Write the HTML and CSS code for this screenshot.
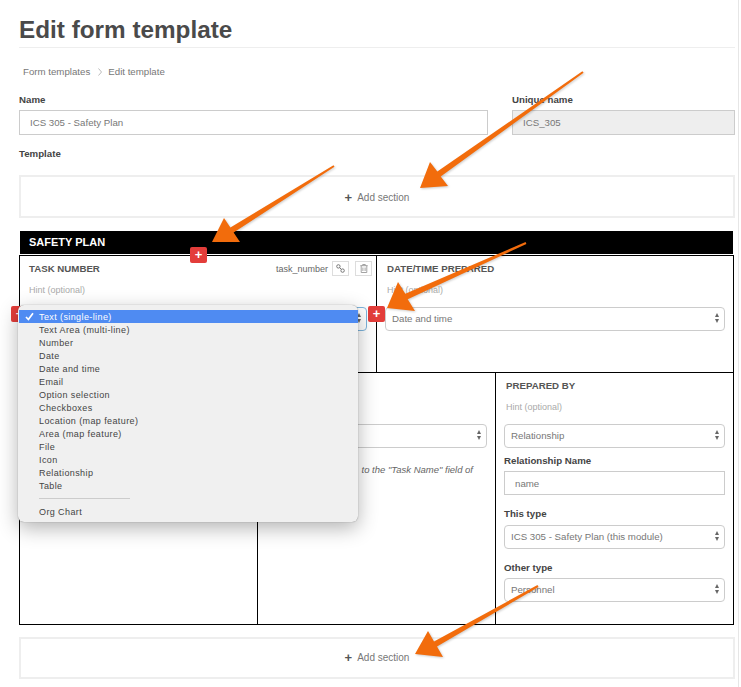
FILE: index.html
```html
<!DOCTYPE html>
<html lang="en">
<head>
    <meta charset="UTF-8">
    <meta name="viewport" content="width=device-width, initial-scale=1.0">
    <title>Edit form template</title>
    <link rel="stylesheet" href="styles.css">
</head>
<body>
    <div class="page">
        <h1>Edit form template</h1>

        <!-- Breadcrumb -->
        <nav class="breadcrumb">
            <span>Form templates</span>
            <svg class="crumb-sep" width="4" height="8" viewBox="0 0 4 8"><path d="M0.5 0.5 L3.5 4 L0.5 7.5" fill="none" stroke="#aaa" stroke-width="0.8"/></svg>
            <span>Edit template</span>
        </nav>

        <!-- Name fields -->
        <div class="name-row">
            <div>
                <label class="label">Name</label>
                <div class="input">ICS 305 - Safety Plan</div>
            </div>
            <div>
                <label class="label">Unique name</label>
                <div class="input input-disabled">ICS_305</div>
            </div>
        </div>

        <div class="label template-label">Template</div>

        <div class="add-section add-top"><span class="add-plus">+</span> Add section</div>

        <!-- Section -->
        <div class="section-title">SAFETY PLAN</div>
        <div class="section-table">
            <div class="row row-two">
                <div class="cell">
                    <div class="cell-head">
                        <span class="field-title">TASK NUMBER</span>
                        <span class="field-meta">
                            <span>task_number</span>
                            <span class="icon-btn">
                                <svg width="9" height="9" viewBox="0 0 9 9" fill="none" stroke="#777" stroke-width="1"><circle cx="2.4" cy="2.4" r="1.7"/><circle cx="6.6" cy="6.6" r="1.7"/><path d="M3.6 3.6 L5.4 5.4"/></svg>
                            </span>
                            <span class="icon-btn">
                                <svg width="8" height="9" viewBox="0 0 8 9" fill="none" stroke="#999" stroke-width="0.9"><path d="M0.3 1.7 H7.7 M2.7 1.7 V0.5 H5.3 V1.7 M1.2 1.7 V8.5 H6.8 V1.7 M2.9 3.5 V7 M5.1 3.5 V7"/></svg>
                            </span>
                        </span>
                    </div>
                    <div class="hint">Hint (optional)</div>
                    <div class="select select-focus"><span></span><span class="updown"></span></div>
                </div>
                <div class="cell">
                    <div class="cell-head"><span class="field-title">DATE/TIME PREPARED</span></div>
                    <div class="hint">Hint (optional)</div>
                    <div class="select"><span>Date and time</span><span class="updown"></span></div>
                </div>
            </div>
            <div class="row row-three">
                <div class="cell"></div>
                <div class="cell">
                    <div class="select select-middle"><span></span><span class="updown"></span></div>
                    <p class="help">to the "Task Name" field of</p>
                </div>
                <div class="cell">
                    <div class="cell-head"><span class="field-title">PREPARED BY</span></div>
                    <div class="hint">Hint (optional)</div>
                    <div class="select"><span>Relationship</span><span class="updown"></span></div>
                    <div class="label sub-label first">Relationship Name</div>
                    <div class="input input-name">name</div>
                    <div class="label sub-label">This type</div>
                    <div class="select select-sub"><span>ICS 305 - Safety Plan (this module)</span><span class="updown"></span></div>
                    <div class="label sub-label">Other type</div>
                    <div class="select select-last"><span>Personnel</span><span class="updown"></span></div>
                </div>
            </div>
        </div>

        <div class="add-section add-bottom"><span class="add-plus">+</span> Add section</div>
    </div>

    <!-- Red insert buttons -->
    <span class="insert insert-top">+</span>
    <span class="insert insert-left">+</span>
    <span class="insert insert-right">+</span>

    <!-- Open native select menu -->
    <ul class="menu">
        <li class="selected">
            <svg class="check" width="9" height="9" viewBox="0 0 9 9"><path d="M1 5 L3.4 7.5 L8 1.2" fill="none" stroke="#fff" stroke-width="1.7"/></svg>
            Text (single-line)
        </li>
        <li>Text Area (multi-line)</li>
        <li>Number</li>
        <li>Date</li>
        <li>Date and time</li>
        <li>Email</li>
        <li>Option selection</li>
        <li>Checkboxes</li>
        <li>Location (map feature)</li>
        <li>Area (map feature)</li>
        <li>File</li>
        <li>Icon</li>
        <li>Relationship</li>
        <li>Table</li>
        <li class="divider"></li>
        <li>Org Chart</li>
    </ul>

    <!-- Annotation arrows -->
    <svg class="arrows" width="741" height="687" viewBox="0 0 741 687">
        <polygon points="583.6,72.8 440.7,176.4 448,186 420,188 430,162 437.3,171.6 582.4,71.2"/>
        <polygon points="334.5,166.8 233.6,232.5 240,242 212,242 224,218 230.4,227.5 333.5,165.2"/>
        <polygon points="526.4,243.9 407.7,299.2 415,311 387,308 398,282 405.3,293.8 525.6,242.1"/>
        <polygon points="538.5,586.9 437,646.6 443,657 415,654 428,631 434,641.4 537.5,585.1"/>
    </svg>
</body>
</html>
```

FILE: styles.css
```css
/* Base */
body {
    margin: 0;
    height: 687px;
    overflow: hidden;
    position: relative;
    background-color: #fff;
    font-family: "Liberation Sans", Arial, sans-serif;
    font-size: 9.7px;
    color: #777;
}

.page {
    width: 716px;
    height: 687px;
    padding-left: 19px;
    padding-right: 3px;
    border-right: 1px solid #e6e6e6;
}

h1 {
    margin: 0;
    height: 47px;
    line-height: 60px;
    font-size: 24.3px;
    font-weight: bold;
    color: #4a4a4a;
    border-bottom: 1px solid #eee;
}

.breadcrumb {
    display: flex;
    align-items: center;
    gap: 6px;
    height: 12px;
    margin-top: 18px;
    padding-left: 4px;
    line-height: 12px;
}

.crumb-sep {
    margin-left: 2px;
}

/* Form fields */
.name-row {
    display: grid;
    grid-template-columns: 469px 223px;
    gap: 24px;
    margin-top: 16px;
}

.label {
    display: block;
    height: 12px;
    line-height: 12px;
    font-size: 9.7px;
    font-weight: bold;
    color: #444;
}

.name-row .label {
    margin-bottom: 4px;
}

.input {
    box-sizing: border-box;
    height: 25px;
    line-height: 23px;
    padding-left: 10px;
    border: 1px solid #ccc;
    background-color: #fff;
}

.input-disabled {
    background-color: #eee;
}

.template-label {
    margin-top: 13px;
}

.add-section {
    box-sizing: border-box;
    height: 43px;
    margin-top: 15px;
    border: 2px solid #eee;
    display: flex;
    align-items: center;
    justify-content: center;
    gap: 5px;
    font-size: 10px;
}

.add-top {
    padding-top: 2px;
}

.add-plus {
    font-size: 13px;
    font-weight: bold;
    color: #555;
}

.add-bottom {
    height: 42px;
    margin-top: 12px;
    padding-bottom: 1px;
}

/* Section table */
.section-title {
    height: 23px;
    line-height: 23px;
    margin-top: 13px;
    margin-left: 1px;
    margin-right: 2px;
    padding-left: 9px;
    background-color: #000;
    color: #fff;
    font-size: 11px;
    font-weight: bold;
}

.section-table {
    width: 713px;
    margin-top: 1px;
    border: 1px solid #000;
}

.row {
    display: grid;
}

.row-two {
    grid-template-columns: 357px 356px;
    height: 117px;
    border-bottom: 1px solid #000;
    box-sizing: border-box;
}

.row-three {
    grid-template-columns: 238px 238px 237px;
    height: 251px;
}

.cell {
    padding: 6px 8px 0 8px;
    border-right: 1px solid #000;
}

.cell:last-child {
    border-right: none;
}

.row-two .cell:first-child {
    padding-right: 9px;
}

.cell-head {
    display: flex;
    align-items: center;
    justify-content: space-between;
    height: 14px;
    padding-left: 2px;
}

.row-two .cell:first-child .cell-head {
    padding-left: 1px;
}

.field-title {
    margin-bottom: 2px;
    font-size: 9.7px;
    font-weight: bold;
    color: #555;
}

.field-meta {
    display: flex;
    align-items: center;
    gap: 4px;
    margin-right: -5px;
    margin-bottom: 1px;
    font-size: 9px;
    color: #666;
}

.icon-btn {
    box-sizing: border-box;
    width: 17px;
    height: 15px;
    display: flex;
    align-items: center;
    justify-content: center;
    border: 1px solid #ddd;
}

.icon-btn + .icon-btn {
    margin-left: 2px;
}

.hint {
    height: 12px;
    line-height: 12px;
    margin-top: 8px;
    padding-left: 2px;
    font-size: 9px;
    color: #aaa;
}

.row-two .cell:first-child .hint {
    padding-left: 1px;
}

.select {
    box-sizing: border-box;
    height: 24px;
    margin-top: 11px;
    padding: 0 5px 2px 6px;
    display: flex;
    align-items: center;
    justify-content: space-between;
    border: 1px solid #ccc;
    border-radius: 4px;
    background-color: #fff;
}

.select-focus {
    border-color: #7db4dc;
}

.select-middle {
    margin-top: 45px;
}

.select-sub {
    margin-top: 5px;
}

.select-last {
    margin-top: 4px;
}

.updown {
    box-sizing: content-box;
    width: 0;
    height: 0;
    margin-top: 5px;
    border-left: 2.5px solid transparent;
    border-right: 2.5px solid transparent;
    border-top: 4px solid #666;
    position: relative;
}

.updown::before {
    content: "";
    position: absolute;
    left: -2.5px;
    top: -9.5px;
    border-left: 2.5px solid transparent;
    border-right: 2.5px solid transparent;
    border-bottom: 4px solid #666;
}

.sub-label {
    margin-top: 13px;
}

.sub-label.first {
    margin-top: 7px;
    margin-bottom: 4px;
}

.input-name {
    height: 24px;
    padding-left: 10px;
}

.help {
    margin: 16px 14px 0 0;
    text-align: right;
    line-height: 12px;
    font-size: 9.5px;
    font-style: italic;
    color: #666;
}

/* Red insert buttons */
.insert {
    position: absolute;
    width: 17px;
    height: 16px;
    line-height: 16px;
    text-align: center;
    border-radius: 2px;
    background-color: #e33d3a;
    color: #fff;
    font-size: 13px;
    font-weight: bold;
}

.insert-top {
    left: 190px;
    top: 247px;
}

.insert-left {
    left: 11px;
    top: 306px;
}

.insert-right {
    left: 368px;
    top: 306px;
}

/* Open select menu */
.menu {
    position: absolute;
    left: 18px;
    top: 305px;
    width: 340px;
    height: 217px;
    box-sizing: border-box;
    margin: 0;
    padding: 5px 0 0 0;
    list-style: none;
    background-color: #f0f0f0;
    border-radius: 6px;
    box-shadow: 0 0 1px rgba(0, 0, 0, 0.5), 0 6px 20px rgba(0, 0, 0, 0.3);
    font-size: 9px;
    letter-spacing: 0.4px;
    color: #444;
}

.menu li {
    position: relative;
    height: 13px;
    line-height: 14px;
    padding-left: 21px;
}

.menu .selected {
    margin-left: 1px;
    padding-left: 20px;
    background-color: #4f8bf2;
    color: #fff;
}

.check {
    position: absolute;
    left: 6px;
    top: 2px;
}

.menu .divider {
    height: 1px;
    margin: 6px 228px 6px 21px;
    padding: 0;
    background-color: #ccc;
}

/* Annotation arrows */
.arrows {
    position: absolute;
    left: 0;
    top: 0;
    fill: #f26c0c;
    filter: drop-shadow(1px 1px 1px rgba(0, 0, 0, 0.2));
}
```
